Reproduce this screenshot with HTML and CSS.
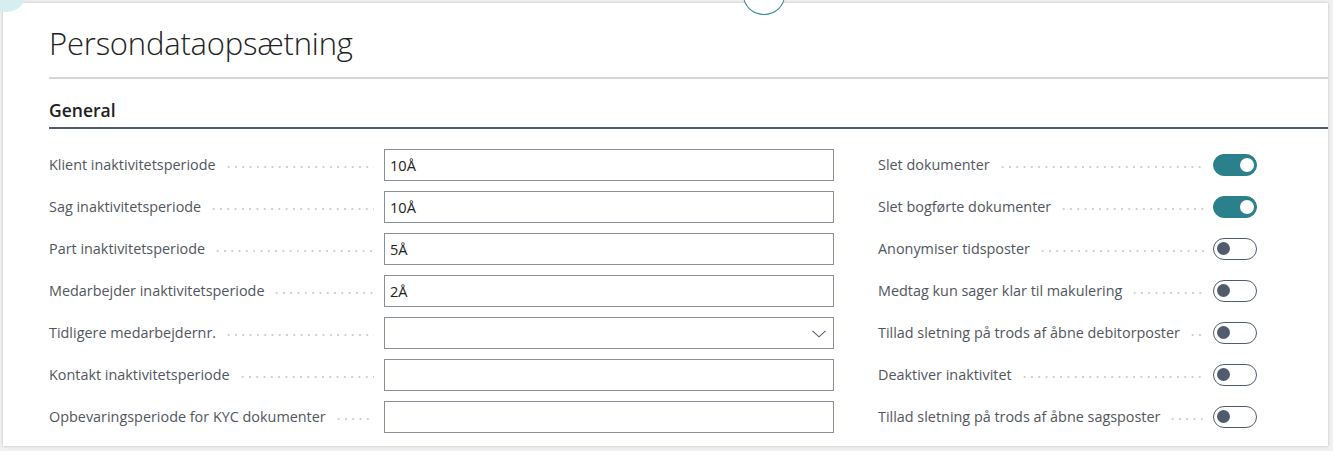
FILE: index.html
```html
<!DOCTYPE html>
<html lang="da">
<head>
<meta charset="utf-8">
<title>Persondataopsætning</title>
<link rel="stylesheet" href="styles.css">
</head>
<body>
<div class="deco-blob"></div>
<div class="card">
  <div class="deco-ring"></div>
  <div class="header"><h1 class="title">Persondataopsætning</h1></div>
  <div class="section">
    <h2 class="section-title">General</h2>
  </div>
  <div class="grid">
    <div class="col">
      <div class="row"><span class="label">Klient inaktivitetsperiode</span><span class="dots"></span><div class="input">10Å</div></div>
      <div class="row"><span class="label">Sag inaktivitetsperiode</span><span class="dots"></span><div class="input">10Å</div></div>
      <div class="row"><span class="label">Part inaktivitetsperiode</span><span class="dots"></span><div class="input">5Å</div></div>
      <div class="row"><span class="label">Medarbejder inaktivitetsperiode</span><span class="dots"></span><div class="input">2Å</div></div>
      <div class="row"><span class="label">Tidligere medarbejdernr.</span><span class="dots"></span><div class="input select"><svg class="chev" width="14" height="8" viewBox="0 0 14 8"><path d="M0.5 0.8 L7 6.8 L13.5 0.8" fill="none" stroke="#505c6d" stroke-width="1.1"/></svg></div></div>
      <div class="row"><span class="label">Kontakt inaktivitetsperiode</span><span class="dots"></span><div class="input"></div></div>
      <div class="row"><span class="label">Opbevaringsperiode for KYC dokumenter</span><span class="dots"></span><div class="input"></div></div>
    </div>
    <div class="col right">
      <div class="row"><span class="label">Slet dokumenter</span><span class="dots"></span><span class="toggle on"><span class="knob"></span></span></div>
      <div class="row"><span class="label">Slet bogførte dokumenter</span><span class="dots"></span><span class="toggle on"><span class="knob"></span></span></div>
      <div class="row"><span class="label">Anonymiser tidsposter</span><span class="dots"></span><span class="toggle"><span class="knob"></span></span></div>
      <div class="row"><span class="label">Medtag kun sager klar til makulering</span><span class="dots"></span><span class="toggle"><span class="knob"></span></span></div>
      <div class="row"><span class="label">Tillad sletning på trods af åbne debitorposter</span><span class="dots"></span><span class="toggle"><span class="knob"></span></span></div>
      <div class="row"><span class="label">Deaktiver inaktivitet</span><span class="dots"></span><span class="toggle"><span class="knob"></span></span></div>
      <div class="row"><span class="label">Tillad sletning på trods af åbne sagsposter</span><span class="dots"></span><span class="toggle"><span class="knob"></span></span></div>
    </div>
  </div>
</div>
</body>
</html>
```

FILE: styles.css
```css
* { box-sizing: border-box; }
html, body { margin: 0; padding: 0; }
body {
  background: #f1f1f1;
  font-family: "Open Sans", "Noto Sans", sans-serif;
  width: 1333px;
  height: 451px;
  overflow: hidden;
  position: relative;
}
.deco-blob {
  position: absolute;
  left: -12px;
  top: -26px;
  width: 38px;
  height: 38px;
  border-radius: 50%;
  background: #d7eef1;
  z-index: 2;
}
.card {
  position: relative;
  margin: 3px 5px 0 3px;
  height: 443px;
  background: #fff;
  box-shadow: 0 0 3px rgba(0,0,0,0.22);
  padding-left: 46px;
}
.deco-ring {
  position: absolute;
  left: 740px;
  top: -28px;
  width: 42px;
  height: 40px;
  border-radius: 50%;
  border: 1px solid #2b8a90;
  background: #fff;
}
.header {
  padding-top: 20px;
  padding-bottom: 14px;
  border-bottom: 2px solid #d4d7da;
}
.title {
  margin: 0;
  font-family: "Open Sans", sans-serif;
  font-weight: 300;
  font-size: 31px;
  line-height: 40px;
  color: #222;
  letter-spacing: -0.2px;
}
.section {
  margin-top: 19px;
  padding-bottom: 5px;
  border-bottom: 2px solid #505c6d;
}
.section-title {
  margin: 0;
  font-family: "Open Sans", sans-serif;
  font-weight: 600;
  font-size: 17.5px;
  line-height: 24px;
  color: #212121;
}
.grid {
  margin-top: 15px;
  display: grid;
  grid-template-columns: 785px 379px;
  column-gap: 44px;
}
.col { display: flex; flex-direction: column; }
.row {
  height: 42px;
  display: flex;
  align-items: center;
}
.label {
  font-size: 14.4px;
  color: #51565e;
  white-space: nowrap;
  line-height: 20px;
}
.dots {
  flex: 1;
  height: 4px;
  margin: 3px 10px 0 9px;
  background-image: radial-gradient(circle, #cfcfcf 0.9px, transparent 1.3px);
  background-size: 7.3px 4px;
  background-repeat: repeat-x;
  background-position: left center;
}
.right .dots { margin-right: 8px; }
.input {
  flex: 0 0 450px;
  height: 32px;
  border: 1px solid #8a8f99;
  padding-left: 5px;
  font-size: 14.6px;
  line-height: 30px;
  color: #212121;
  display: flex;
  align-items: center;
}
.input.select { justify-content: flex-end; padding-right: 7px; }
.chev { display: block; margin-top: 1px; }
.toggle {
  flex: 0 0 44px;
  height: 22px;
  border-radius: 11px;
  border: 1.5px solid #505c6d;
  position: relative;
  background: #fff;
}
.toggle .knob {
  position: absolute;
  left: 3px;
  top: 3px;
  width: 13px;
  height: 13px;
  border-radius: 50%;
  background: #505c6d;
}
.toggle.on {
  background: #2a808b;
  border-color: #2a808b;
}
.toggle.on .knob {
  left: auto;
  right: 2.5px;
  top: 2.5px;
  width: 14px;
  height: 14px;
  background: #fff;
}
```
